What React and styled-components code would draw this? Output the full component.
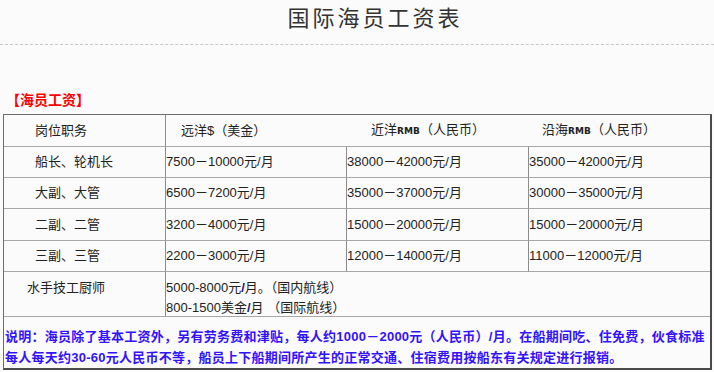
import React from "react";
import styled, { createGlobalStyle } from "styled-components";

const GlobalStyle = createGlobalStyle`
  body {
    margin: 0;
    background: #fbfbfb;
    font-family: "Liberation Sans", "Noto Sans CJK SC", sans-serif;
    color: #333;
  }
`;

const Page = styled.div`
  width: 714px;
  height: 372px;
  overflow: hidden;
`;

const Title = styled.h1`
  margin: 0;
  padding: 3px 0 0 36px;
  height: 33px;
  text-align: center;
  font-family: "Noto Sans CJK SC", sans-serif;
  font-weight: 400;
  font-size: 22px;
  line-height: 26px;
  letter-spacing: 3px;
  color: #333;
`;

const Divider = styled.div`
  border-top: 1px dashed #c8c8c8;
  margin-top: 8px;
`;

const Label = styled.div`
  margin: 45px 0 0 6px;
  height: 19px;
  font-family: "Noto Sans CJK SC", sans-serif;
  font-weight: 700;
  font-size: 14px;
  line-height: 19px;
  color: #ff0000;
`;

const Grid = styled.div`
  margin: 5px 0 0 3px;
  width: 706px;
  display: grid;
  grid-template-columns: 162px 181px 182px 1fr;
  grid-template-rows: 32px 31px 31px 32px 31px 45px 51px;
  border-top: 1px solid #6d6d6d;
  border-left: 1px solid #6d6d6d;
  border-right: 2px solid #4a4a4a;
  border-bottom: 2px solid #4a4a4a;
  font-size: 13px;
  color: #222;
`;

const Cell = styled.div`
  display: flex;
  align-items: ${({ $top }) => ($top ? "flex-start" : "center")};
  flex-direction: ${({ $stack }) => ($stack ? "column" : "row")};
  padding-left: ${({ $pad }) => $pad || 0}px;
  border-right: ${({ $right }) => ($right ? "1px solid #8c8c8c" : "none")};
  border-bottom: 1px solid #a8a8a8;
  grid-column: ${({ $span }) => ($span ? `span ${$span}` : "auto")};
  white-space: nowrap;
`;

const Text = styled.span`
  line-height: 18px;
`;

const Small = styled.span`
  font-family: "DejaVu Sans", sans-serif;
  font-size: 9px;
  font-weight: 700;
  letter-spacing: 0.1px;
  vertical-align: baseline;
`;

const Line = styled.div`
  height: 20px;
  line-height: 20px;
  margin-top: ${({ $first }) => ($first ? 6 : 0)}px;
`;

const Slash = styled.b`
  color: #1a1a7a;
`;

const Notes = styled.div`
  grid-column: span 4;
  padding: 9px 0 0 1px;
  font-family: "Liberation Sans", "Noto Sans CJK SC", sans-serif;
  font-weight: 700;
  font-size: 13px;
  line-height: 21px;
  letter-spacing: 0.25px;
  color: #3312ff;
  white-space: nowrap;
`;

const rows = [
  ["船长、轮机长", "7500－10000元/月", "38000－42000元/月", "35000－42000元/月"],
  ["大副、大管", "6500－7200元/月", "35000－37000元/月", "30000－35000元/月"],
  ["二副、二管", "3200－4000元/月", "15000－20000元/月", "15000－20000元/月"],
  ["三副、三管", "2200－3000元/月", "12000－14000元/月", "11000－12000元/月"],
];

const App = () => {
  return (
    <Page>
      <GlobalStyle />
      <Title>国际海员工资表</Title>
      <Divider />
      <Label>【海员工资】</Label>
      <Grid>
        <Cell $right $pad={31}>
          <Text>岗位职务</Text>
        </Cell>
        <Cell $pad={15}>
          <Text>远洋$（美金）</Text>
        </Cell>
        <Cell $pad={24}>
          <Text>
            近洋<Small>RMB</Small>（人民币）
          </Text>
        </Cell>
        <Cell $pad={13}>
          <Text>
            沿海<Small>RMB</Small>（人民币）
          </Text>
        </Cell>

        {rows.map((row) => (
          <React.Fragment key={row[0]}>
            <Cell $right $pad={31}>
              <Text>{row[0]}</Text>
            </Cell>
            <Cell $right>
              <Text>{row[1]}</Text>
            </Cell>
            <Cell $right>
              <Text>{row[2]}</Text>
            </Cell>
            <Cell>
              <Text>{row[3]}</Text>
            </Cell>
          </React.Fragment>
        ))}

        <Cell $right $top $pad={23}>
          <Line $first>水手技工厨师</Line>
        </Cell>
        <Cell $span={3} $top $stack>
          <Line $first>
            5000-8000元<Slash>/</Slash>月。（国内航线）
          </Line>
          <Line>
            800-1500美金<Slash>/</Slash>月 （国际航线）
          </Line>
        </Cell>

        <Notes>
          <div>
            说明：海员除了基本工资外，另有劳务费和津贴，每人约1000－2000元（人民币）/月。在船期间吃、住免费，伙食标准
          </div>
          <div>
            每人每天约30-60元人民币不等，船员上下船期间所产生的正常交通、住宿费用按船东有关规定进行报销。
          </div>
        </Notes>
      </Grid>
    </Page>
  );
};

export default App;
